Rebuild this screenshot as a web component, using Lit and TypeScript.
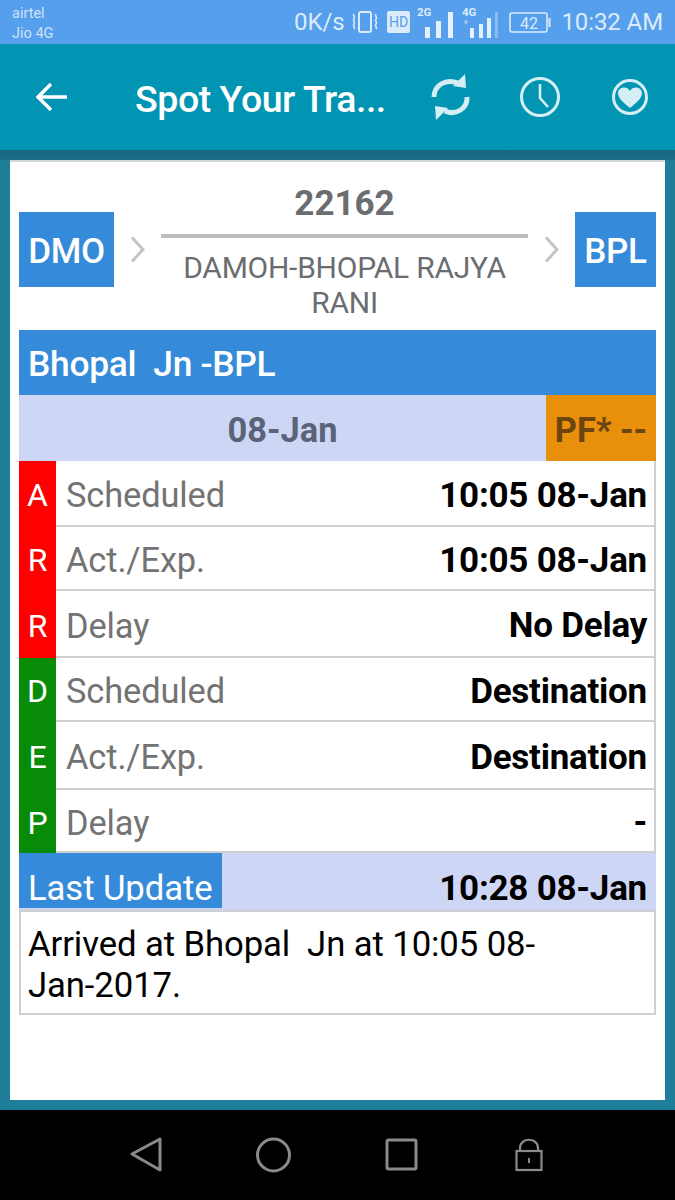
import { LitElement, html, css } from "lit";
import { customElement } from "lit/decorators.js";

const rows = [
  { l: "A", c: "red", k: "Scheduled", v: "10:05 08-Jan", h: 66 },
  { l: "R", c: "red", k: "Act./Exp.", v: "10:05 08-Jan", h: 64 },
  { l: "R", c: "red", k: "Delay", v: "No Delay", h: 67 },
  { l: "D", c: "green", k: "Scheduled", v: "Destination", h: 64 },
  { l: "E", c: "green", k: "Act./Exp.", v: "Destination", h: 68 },
  { l: "P", c: "green", k: "Delay", v: "-", h: 63 },
];

@customElement("app-root")
export class AppRoot extends LitElement {
  static styles = css`
    :host { display: block; width: 675px; height: 1200px; overflow: hidden; font-family: Roboto, "Liberation Sans", sans-serif; background: #000; }
    .status { height: 44px; background: #559fec; color: #dcebfb; display: flex; align-items: center; justify-content: space-between; padding: 0 12px; box-sizing: border-box; }
    .carrier { font-size: 14.5px; line-height: 20px; color: #cfe2f8; padding-top: 3px; }
    .sright { display: flex; align-items: center; height: 44px; }
    .speed { font-size: 24px; letter-spacing: -0.1px; }
    .vib { margin-left: 7px; }
    .hd { margin-left: 8px; }
    .s2 { margin-left: 6px; }
    .s4 { margin-left: 7px; }
    .batt { margin-left: 11px; }
    .time { font-size: 24px; margin-left: 10px; letter-spacing: -0.1px; }
    .appbar { height: 106px; background: #0295b3; display: flex; align-items: center; color: #fff; }
    .back { margin-left: 36px; width: 32px; height: 30px; }
    .title { margin-left: 67px; font-size: 37.5px; font-weight: 500; width: 294px; white-space: nowrap; letter-spacing: -0.45px; padding-top: 3px; }
    .clock { margin-left: 48px; }
    .heart { margin-left: 52px; }
    .body { height: 960px; background: #1f7f9a; box-sizing: border-box; padding: 0 10px 10px; }
    .shadow { height: 10px; margin: 0 -10px; background: linear-gradient(#18687f, #1a6e88); }
    .card { height: 940px; background: #fff; box-sizing: border-box; padding: 0 9px; border-top: 2px solid #cfd6da; }
    .route { display: flex; height: 168px; box-sizing: border-box; }
    .code { background: #358bd9; color: #fff; font-size: 35px; font-weight: 500; display: flex; align-items: center; justify-content: center; height: 75px; margin-top: 50px; letter-spacing: -0.3px; padding-top: 3px; box-sizing: border-box; }
    .dmo { width: 95px; }
    .bpl { width: 81px; }
    .chev { width: 47px; height: 75px; margin-top: 50px; display: flex; align-items: center; justify-content: center; }
    .mid { flex: 1; text-align: center; color: #6b6d70; min-width: 0; }
    .num { font-size: 35px; font-weight: 700; line-height: 38px; margin-top: 23px; }
    .rule { height: 4px; background: #bdbdbd; margin: 11px 0 12px; }
    .name { font-size: 30px; line-height: 35px; letter-spacing: -0.25px; }
    .stn { height: 65px; background: #358bd9; color: #fff; font-size: 35.4px; font-weight: 500; display: flex; align-items: center; padding: 3px 0 0 9px; box-sizing: border-box; white-space: pre; letter-spacing: -0.3px; }
    .date { height: 66px; display: flex; background: #cdd7f5; }
    .date .d { flex: 1; display: flex; align-items: center; justify-content: center; color: #5a6378; font-size: 34.4px; font-weight: 700; padding-top: 3px; }
    .pf { width: 110px; background: #e8900c; color: #6b4410; font-size: 34.4px; font-weight: 700; display: flex; align-items: center; justify-content: center; white-space: nowrap; padding-top: 3px; box-sizing: border-box; }
    .row { display: flex; box-sizing: border-box; }
    .tag { width: 37px; color: #fff; font-size: 32px; display: flex; align-items: center; justify-content: center; flex: none; padding-top: 2px; box-sizing: border-box; }
    .tag.red { background: #fe0000; }
    .tag.green { background: #078b09; }
    .cell { flex: 1; display: flex; align-items: center; justify-content: space-between; padding: 4px 7px 0 10px; border-right: 2px solid #cfcfcf; border-bottom: 2px solid #cfcfcf; }
    .k { color: #737373; font-size: 34.4px; letter-spacing: -0.1px; }
    .v { color: #000; font-size: 35px; font-weight: 700; letter-spacing: -0.25px; }
    .last { height: 57px; background: #cdd7f5; display: flex; justify-content: space-between; overflow: hidden; }
    .lu { width: 203px; height: 55px; background: #358bd9; color: #fff; font-size: 34.7px; box-sizing: border-box; padding-left: 9px; white-space: nowrap; letter-spacing: -0.1px; }
    .lut { height: 48px; overflow: hidden; padding-top: 14px; box-sizing: border-box; line-height: 42px; }
    .lv { font-size: 35px; font-weight: 700; color: #000; padding: 15px 9px 0 0; line-height: 42px; letter-spacing: -0.25px; }
    .msg { height: 105px; border: 2px solid #cfcfcf; box-sizing: border-box; padding: 12px 100px 0 7px; font-size: 34.7px; line-height: 41px; color: #000; white-space: pre-wrap; letter-spacing: -0.1px; }
    .nav { height: 90px; background: #000; display: flex; align-items: center; }
    svg { display: block; flex: none; }
  `;

  private chev() {
    return html`<svg width="15" height="27" viewBox="0 0 15 27"><path d="M2 1.500 L13 13.500 L2 25.500" fill="none" stroke="#c4c4c4" stroke-width="3"/></svg>`;
  }

  render() {
    const c = "#e4f0fc";
    return html`
      <div class="status">
        <div class="carrier"><div>airtel</div><div>Jio 4G</div></div>
        <div class="sright">
          <span class="speed">0K/s</span>
          <svg class="vib" width="28" height="24" viewBox="0 0 28 24"><rect x="8" y="2" width="12" height="20" rx="2" fill="none" stroke="#dcebfb" stroke-width="2"/><path d="M3 4c-2 2 2 3 0 5s2 3 0 5 2 3 0 5M25 4c-2 2 2 3 0 5s2 3 0 5 2 3 0 5" fill="none" stroke="#dcebfb" stroke-width="1.6"/></svg>
          <svg class="hd" width="23" height="22" viewBox="0 0 23 22"><rect width="23" height="22" rx="2" fill="#dcebfb"/><text x="11.500" y="16" font-size="14" text-anchor="middle" fill="#559fec" font-family="Roboto">HD</text></svg>
          <svg class="s2" width="38" height="34" viewBox="0 0 38 34">
            <text x="1" y="11" font-size="11.5" font-weight="700" fill="#dcebfb" font-family="Roboto">2G</text>
            <rect x="9" y="22" width="5" height="11" fill=${c}/>
            <rect x="20" y="16" width="5" height="17" fill=${c}/>
            <rect x="32" y="7" width="5" height="26" fill=${c}/>
          </svg>
          <svg class="s4" width="37" height="34" viewBox="0 0 37 34">
            <text x="1" y="11" font-size="11.5" font-weight="700" fill="#dcebfb" font-family="Roboto">4G</text>
            <path d="M3 17 l2 -3 v6 z M7 17 l-2 3 v-6 z" fill="#9cc6f3"/>
            <rect x="9" y="23" width="4" height="10" fill=${c}/>
            <rect x="18" y="19" width="4" height="14" fill=${c}/>
            <rect x="26" y="13" width="4" height="20" fill=${c}/>
            <rect x="34" y="7" width="3" height="26" fill="#8cbdf2"/>
          </svg>
          <svg class="batt" width="42" height="21" viewBox="0 0 42 21"><rect x="1" y="1" width="37" height="19" rx="2" fill="none" stroke="#dcebfb" stroke-width="1.6"/><rect x="39.500" y="6" width="2" height="9" fill="#dcebfb"/><text x="20" y="16.500" font-size="16" text-anchor="middle" fill="#dcebfb" font-family="Roboto">42</text></svg>
          <span class="time">10:32 AM</span>
        </div>
      </div>
      <div class="appbar">
        <svg class="back" viewBox="0 0 32 30"><path d="M31 15H3M15 2 L2 15 L15 28" fill="none" stroke="#fff" stroke-width="3.4"/></svg>
        <div class="title">Spot Your Tra...</div>
        <svg width="43" height="48" viewBox="0 0 43 48">
          <path d="M5 24 C5 13 16 5 29 10 M38 24 C39 35 27 43 16 38" fill="none" stroke="#d4eef3" stroke-width="5"/>
          <path d="M36 1 L37 15 L24 13 Z M7 47 L6 33 L19 35 Z" fill="#d4eef3"/>
        </svg>
        <svg class="clock" width="40" height="40" viewBox="0 0 40 40"><circle cx="20" cy="20" r="18.500" fill="none" stroke="#d4eef3" stroke-width="3"/><path d="M20 7 V21 L28 30" fill="none" stroke="#d4eef3" stroke-width="2.600"/></svg>
        <svg class="heart" width="36" height="36" viewBox="0 0 36 36"><circle cx="18" cy="18" r="16.500" fill="none" stroke="#d4eef3" stroke-width="3"/><path d="M18 29 C9 22 6 18 6 14 C6 8 15 6 18 12 C21 6 30 8 30 14 C30 18 27 22 18 29 Z" fill="#d4eef3"/></svg>
      </div>
      <div class="body">
        <div class="shadow"></div>
        <div class="card">
          <div class="route">
            <div class="code dmo">DMO</div>
            <div class="chev">${this.chev()}</div>
            <div class="mid">
              <div class="num">22162</div>
              <div class="rule"></div>
              <div class="name">DAMOH-BHOPAL RAJYA RANI</div>
            </div>
            <div class="chev">${this.chev()}</div>
            <div class="code bpl">BPL</div>
          </div>
          <div class="stn">Bhopal  Jn -BPL</div>
          <div class="date"><div class="d">08-Jan</div><div class="pf">PF* --</div></div>
          ${rows.map(r => html`<div class="row" style="height:${r.h}px">
            <div class="tag ${r.c}">${r.l}</div>
            <div class="cell"><span class="k">${r.k}</span><span class="v">${r.v}</span></div>
          </div>`)}
          <div class="last"><div class="lu"><div class="lut">Last Update</div></div><div class="lv">10:28 08-Jan</div></div>
          <div class="msg">Arrived at Bhopal  Jn at 10:05 08-Jan-2017.</div>
        </div>
      </div>
      <div class="nav">
        <svg width="675" height="90" viewBox="0 0 675 90">
          <path d="M160 29 L132 44 L160 60 Z" fill="none" stroke="#8a8a8a" stroke-width="3" stroke-linejoin="round"/>
          <circle cx="273.500" cy="45" r="16" fill="none" stroke="#8a8a8a" stroke-width="3"/>
          <rect x="387" y="30" width="29" height="29" rx="1.500" fill="none" stroke="#8a8a8a" stroke-width="3"/>
          <rect x="516.500" y="41" width="25" height="19" fill="none" stroke="#8a8a8a" stroke-width="2.200"/>
          <path d="M520 41 V38 C520 27 538 27 538 38 V41" fill="none" stroke="#8a8a8a" stroke-width="2.200"/>
          <rect x="528" y="48" width="2" height="5" fill="#8a8a8a"/>
        </svg>
      </div>
    `;
  }
}
